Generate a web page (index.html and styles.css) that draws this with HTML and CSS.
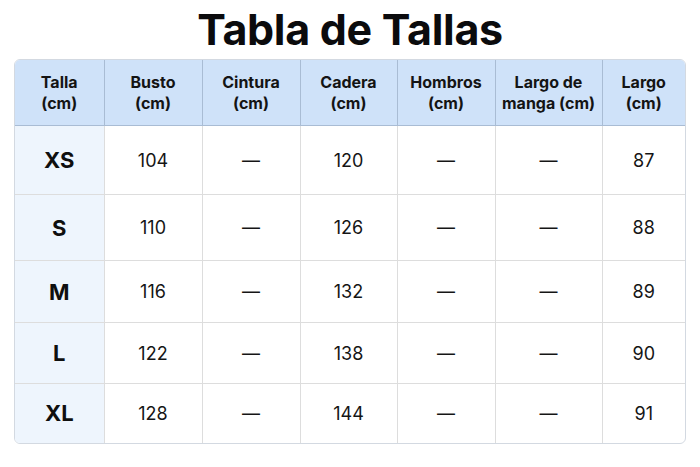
FILE: index.html
```html
<!DOCTYPE html>
<html lang="es">
<head>
<meta charset="utf-8">
<title>Tabla de Tallas</title>
<link rel="stylesheet" href="styles.css">
</head>
<body>
<main class="page">
  <h1 class="title">Tabla de Tallas</h1>
  <div class="table-wrap">
    <table class="sizes">
      <colgroup>
        <col class="c1"><col class="c2"><col class="c3"><col class="c4"><col class="c5"><col class="c6"><col class="c7">
      </colgroup>
      <thead>
        <tr>
          <th>Talla<br>(cm)</th>
          <th>Busto<br>(cm)</th>
          <th>Cintura<br>(cm)</th>
          <th>Cadera<br>(cm)</th>
          <th>Hombros<br>(cm)</th>
          <th>Largo de<br>manga (cm)</th>
          <th>Largo<br>(cm)</th>
        </tr>
      </thead>
      <tbody>
        <tr class="r1"><td class="size">XS</td><td>104</td><td>—</td><td>120</td><td>—</td><td>—</td><td>87</td></tr>
        <tr class="r2"><td class="size">S</td><td>110</td><td>—</td><td>126</td><td>—</td><td>—</td><td>88</td></tr>
        <tr class="r3"><td class="size">M</td><td>116</td><td>—</td><td>132</td><td>—</td><td>—</td><td>89</td></tr>
        <tr class="r4"><td class="size">L</td><td>122</td><td>—</td><td>138</td><td>—</td><td>—</td><td>90</td></tr>
        <tr class="r5"><td class="size">XL</td><td>128</td><td>—</td><td>144</td><td>—</td><td>—</td><td>91</td></tr>
      </tbody>
    </table>
  </div>
</main>
</body>
</html>
```

FILE: styles.css
```css
html, body {
  margin: 0;
  padding: 0;
  background: #ffffff;
}
body {
  font-family: Inter, "Liberation Sans", sans-serif;
  color: #111111;
}
.page {
  display: flex;
  flex-direction: column;
  align-items: center;
  padding-top: 5px;
}
.title {
  margin: 0 0 6px 0;
  font-size: 43px;
  line-height: 48px;
  font-weight: 700;
  color: #0b0b0d;
  letter-spacing: -0.3px;
}
.table-wrap {
  width: 672px;
  border: 1px solid #d3d9e1;
  border-radius: 6px;
  overflow: hidden;
  box-sizing: border-box;
}
.sizes {
  width: 100%;
  border-collapse: collapse;
  table-layout: fixed;
}
.c1 { width: 89px; }
.c2 { width: 98px; }
.c3 { width: 98px; }
.c4 { width: 97px; }
.c5 { width: 98px; }
.c6 { width: 107px; }
.c7 { width: auto; }
.sizes th, .sizes td {
  text-align: center;
  vertical-align: middle;
  padding: 0;
  border: 1px solid #dddddd;
}
.sizes tr > :first-child { border-left: none; }
.sizes tr > :last-child { border-right: none; }
.sizes thead tr > * { border-top: none; }
.sizes tbody tr:last-child > * { border-bottom: none; }
.sizes th {
  height: 65px;
  background: #cfe2f9;
  border-color: #a9bcd4;
  font-size: 16px;
  line-height: 21px;
  font-weight: 700;
  color: #141414;
}
.sizes td {
  font-size: 18px;
  font-weight: 400;
  color: #151515;
}
.sizes td.size {
  background: #eef5fd;
  font-size: 22px;
  font-weight: 700;
  color: #0f0f0f;
}
.r1 { height: 69px; }
.r2 { height: 66px; }
.r3 { height: 62px; }
.r4 { height: 61px; }
.r5 { height: 59px; }
```
